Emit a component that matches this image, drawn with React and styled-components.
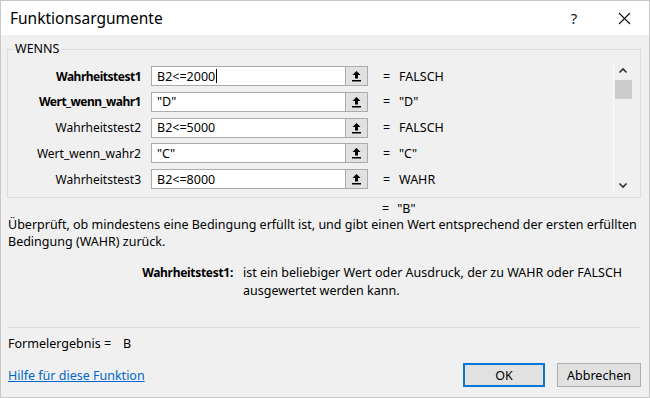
import React from 'react';
import styled, { createGlobalStyle } from 'styled-components';

const Global = createGlobalStyle`
  html, body {
    margin: 0;
    padding: 0;
    background: #f0f0f0;
  }
  * {
    box-sizing: border-box;
  }
`;

const Dialog = styled.div`
  width: 650px;
  height: 398px;
  display: flex;
  flex-direction: column;
  background: #f0f0f0;
  border: 1px solid #c8c8c8;
  font-family: 'Segoe UI', 'Noto Sans', sans-serif;
  font-size: 12.5px;
  color: #000;
  overflow: hidden;
`;

const TitleBar = styled.div`
  height: 34px;
  flex: none;
  background: #fff;
  display: flex;
  align-items: center;
  padding-left: 9px;
`;

const Title = styled.div`
  flex: 1;
  font-size: 15.5px;
  padding-bottom: 1px;
`;

const TitleButton = styled.div`
  width: 50px;
  height: 34px;
  display: flex;
  align-items: center;
  justify-content: center;
  font-size: 15px;
  color: #111;
`;

const Body = styled.div`
  flex: 1;
  display: flex;
  flex-direction: column;
  padding: 0 8px 0 6px;
`;

const Group = styled.fieldset`
  margin: 6px 0 0 0;
  padding: 9px 8px 8px 0;
  border: 1px solid #dcdcdc;
  display: flex;
  min-width: 0;
`;

const Legend = styled.legend`
  padding: 0 2px;
  margin-left: 5px;
  font-size: 12.5px;
  line-height: 16px;
`;

const Rows = styled.div`
  flex: 1;
  display: flex;
  flex-direction: column;
  gap: 5.75px;
`;

const Row = styled.div`
  display: grid;
  grid-template-columns: 143px 194px 23px 31px 1fr;
  align-items: center;
  height: 20px;
`;

const Label = styled.div`
  text-align: right;
  padding-right: 10px;
  font-size: 12px;
  font-weight: ${(p) => (p.$bold ? 700 : 400)};
  letter-spacing: ${(p) => (p.$bold ? '-0.5px' : '0')};
  white-space: nowrap;
`;

const Field = styled.div`
  height: 20px;
  background: #fff;
  border: 1px solid #ababab;
  border-right: none;
  padding-left: 5px;
  display: flex;
  align-items: center;
  white-space: nowrap;
`;

const Caret = styled.span`
  display: inline-block;
  width: 1px;
  height: 14px;
  background: #000;
  margin-left: 1px;
`;

const RefButton = styled.div`
  height: 20px;
  background: #e1e1e1;
  border: 1px solid #ababab;
  display: flex;
  align-items: center;
  justify-content: center;
`;

const Eq = styled.div`
  padding-left: 15px;
`;

const Value = styled.div`
  white-space: nowrap;
`;

const ScrollBar = styled.div`
  width: 19px;
  margin-top: -4px;
  margin-bottom: -4px;
  display: flex;
  flex-direction: column;
  align-items: center;
  border-left: 1px solid #fafafa;
`;

const Arrow = styled.div`
  height: 16px;
  display: flex;
  align-items: center;
  justify-content: center;
`;

const Thumb = styled.div`
  width: 17px;
  height: 19px;
  background: #cdcdcd;
  margin-top: 2px;
`;

const Track = styled.div`
  flex: 1;
`;

const ResultLine = styled.div`
  display: flex;
  gap: 8px;
  padding-left: 375px;
  margin-top: 5px;
  height: 12px;
  line-height: 12px;
  align-items: center;
`;

const Description = styled.div`
  margin-top: 1px;
  line-height: 17px;
  padding-left: 1px;
  white-space: nowrap;
`;

const ArgHelp = styled.div`
  display: grid;
  grid-template-columns: 236px 1fr;
  margin-top: 14px;
  line-height: 18px;
`;

const ArgName = styled.div`
  font-weight: 700;
  font-size: 12px;
  letter-spacing: -0.3px;
  text-align: right;
  padding-right: 10px;
`;

const Separator = styled.div`
  height: 1px;
  background: #dcdcdc;
  margin-top: 27px;
`;

const Formula = styled.div`
  margin-top: 6px;
  height: 18px;
  display: flex;
  align-items: center;
  padding-left: 1px;
  gap: 12px;
`;

const Footer = styled.div`
  display: flex;
  align-items: center;
  margin-top: 11px;
`;

const HelpLink = styled.a`
  flex: 1;
  color: #0066cc;
  text-decoration: underline;
  padding-left: 1px;
`;

const Button = styled.div`
  width: ${(p) => p.$w}px;
  height: 24px;
  margin-left: ${(p) => p.$ml}px;
  display: flex;
  align-items: center;
  justify-content: center;
  background: #e1e1e1;
  border: ${(p) => (p.$primary ? '2px solid #0078d7' : '1px solid #adadad')};
`;

const UpIcon = () => (
  <svg width="11" height="12" viewBox="0 0 11 12">
    <path d="M5.5 1 L1.5 5 H4 V8.5 H7 V5 H9.5 Z" fill="#000" />
    <rect x="1" y="10" width="9" height="1.5" fill="#000" />
  </svg>
);

const Chevron = ({ down }) => (
  <svg width="10" height="7" viewBox="0 0 10 7">
    <path
      d={down ? 'M1.5 1.5 L5 5 L8.5 1.5' : 'M1.5 5.5 L5 2 L8.5 5.5'}
      fill="none"
      stroke="#333"
      strokeWidth="1.6"
    />
  </svg>
);

const rows = [
  { label: 'Wahrheitstest1', bold: true, input: 'B2<=2000', value: 'FALSCH', caret: true },
  { label: 'Wert_wenn_wahr1', bold: true, input: '"D"', value: '"D"' },
  { label: 'Wahrheitstest2', input: 'B2<=5000', value: 'FALSCH' },
  { label: 'Wert_wenn_wahr2', input: '"C"', value: '"C"' },
  { label: 'Wahrheitstest3', input: 'B2<=8000', value: 'WAHR' },
];

export default function App() {
  return (
    <>
      <Global />
      <Dialog>
        <TitleBar>
          <Title>Funktionsargumente</Title>
          <TitleButton>?</TitleButton>
          <TitleButton>
            <svg width="13" height="13" viewBox="0 0 13 13">
              <path d="M1 1 L12 12 M12 1 L1 12" stroke="#111" strokeWidth="1.1" />
            </svg>
          </TitleButton>
        </TitleBar>
        <Body>
          <Group>
            <Legend>WENNS</Legend>
            <Rows>
              {rows.map((r) => (
                <Row key={r.label}>
                  <Label $bold={r.bold}>{r.label}</Label>
                  <Field>
                    {r.input}
                    {r.caret && <Caret />}
                  </Field>
                  <RefButton>
                    <UpIcon />
                  </RefButton>
                  <Eq>=</Eq>
                  <Value>{r.value}</Value>
                </Row>
              ))}
            </Rows>
            <ScrollBar>
              <Arrow>
                <Chevron />
              </Arrow>
              <Thumb />
              <Track />
              <Arrow>
                <Chevron down />
              </Arrow>
            </ScrollBar>
          </Group>
          <ResultLine>
            <span>=</span>
            <Value>"B"</Value>
          </ResultLine>
          <Description>
            Überprüft, ob mindestens eine Bedingung erfüllt ist, und gibt einen Wert entsprechend der ersten erfüllten
            <br />
            Bedingung (WAHR) zurück.
          </Description>
          <ArgHelp>
            <ArgName>Wahrheitstest1:</ArgName>
            <div>
              ist ein beliebiger Wert oder Ausdruck, der zu WAHR oder FALSCH
              <br />
              ausgewertet werden kann.
            </div>
          </ArgHelp>
          <Separator />
          <Formula>
            <span>Formelergebnis =</span>
            <span>B</span>
          </Formula>
          <Footer>
            <HelpLink>Hilfe für diese Funktion</HelpLink>
            <Button $primary $w={82} $ml={0}>OK</Button>
            <Button $w={84} $ml={12}>Abbrechen</Button>
          </Footer>
        </Body>
      </Dialog>
    </>
  );
}
